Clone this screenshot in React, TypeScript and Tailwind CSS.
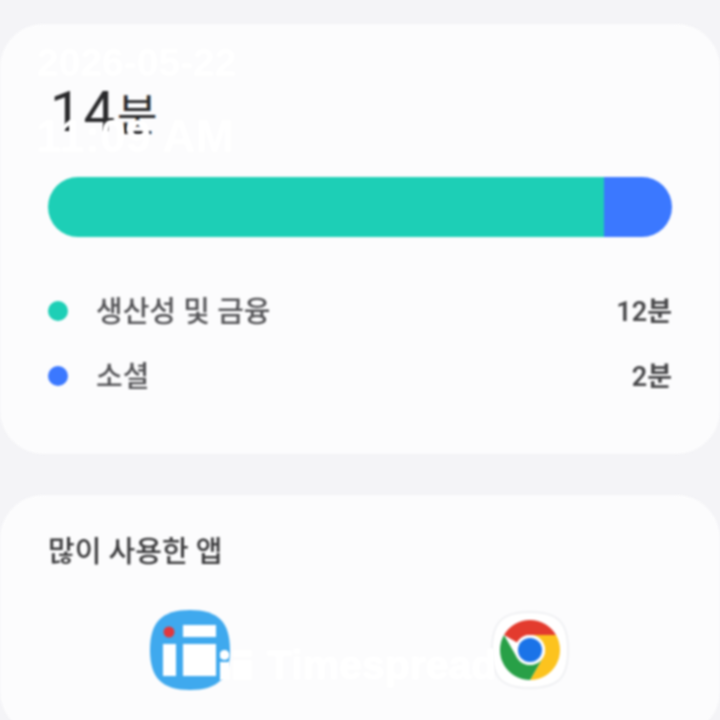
const korean = "font-['Roboto','Noto_Sans_CJK_KR',sans-serif]";

function LegendRow({ color, label, value }: { color: string; label: string; value: string }) {
  return (
    <div className="flex h-[65px] items-center">
      <div className={`h-5 w-5 rounded-full ${color}`} />
      <span className="ml-7 pt-[3px] text-[29px] leading-none font-medium text-[#555558]">{label}</span>
      <span className="ml-auto pt-[3px] text-[27px] leading-none font-semibold text-[#48484a]">{value}</span>
    </div>
  );
}

function TimespreadIcon() {
  return (
    <svg width="80" height="80" viewBox="0 0 80 80">
      <path d="M40 0C68 0 80 12 80 40C80 68 68 80 40 80C12 80 0 68 0 40C0 12 12 0 40 0Z" fill="#3fa9ee" />
      <circle cx="19" cy="22" r="5.5" fill="#e0383e" />
      <rect x="33" y="15" width="33" height="12" fill="#fff" />
      <rect x="13" y="34" width="13" height="32" fill="#fff" />
      <rect x="33" y="34" width="33" height="32" fill="#fff" />
    </svg>
  );
}

function ChromeIcon() {
  return (
    <svg width="80" height="80" viewBox="0 0 80 80">
      <path d="M40 2C68 2 78 12 78 40C78 68 68 78 40 78C12 78 2 68 2 40C2 12 12 2 40 2Z" fill="#fff" stroke="#ecedf0" strokeWidth="1.5" />
      <path d="M40 10A30 30 0 0 1 66 25H40A15 15 0 0 0 27 32.5L14 25A30 30 0 0 1 40 10Z" fill="#e33b2e" />
      <path d="M66 25A30 30 0 0 1 40 70L53 47.5A15 15 0 0 0 53 32.5 15 15 0 0 0 40 25Z" fill="#fcc31e" />
      <path d="M14 25L27 47.5A15 15 0 0 0 53 47.5L40 70A30 30 0 0 1 14 25Z" fill="#28a047" />
      <circle cx="40" cy="40" r="15" fill="#fff" />
      <circle cx="40" cy="40" r="12" fill="#1a73e8" />
    </svg>
  );
}

export default function App() {
  return (
    <div className={`relative h-[720px] w-[720px] overflow-hidden bg-[#f4f4f7] pt-6 ${korean}`}>
      <div className="blur-[0.8px]">
        <section className="h-[430px] rounded-[44px] bg-[#fcfcfd] px-12 pt-[60px]">
          <div className="flex h-[60px] items-baseline text-[#2a2a2c]">
            <span className="pl-[2px] text-[56px] leading-none tracking-[2px]">14</span>
            <span className="text-[44px] leading-none">분</span>
          </div>
          <div className="mt-[33px] flex h-[60px] overflow-hidden rounded-full">
            <div className="w-[556px] bg-[#1dcfb6]" />
            <div className="flex-1 bg-[#3b78ff]" />
          </div>
          <div className="mt-[41px]">
            <LegendRow color="bg-[#1dcfb6]" label="생산성 및 금융" value="12분" />
            <LegendRow color="bg-[#3b78ff]" label="소셜" value="2분" />
          </div>
        </section>

        <section className="mt-[41px] h-[240px] rounded-[44px] bg-[#fcfcfd] px-12 pt-[38px]">
          <h2 className="text-[29px] leading-[38px] font-medium text-[#3c3c3e]">많이 사용한 앱</h2>
          <div className="mt-[39px] flex">
            <div className="ml-[102px]"><TimespreadIcon /></div>
            <div className="ml-[260px]"><ChromeIcon /></div>
          </div>
        </section>
      </div>

      {/* watermark on top of the page */}
      <div className="absolute top-[40px] left-[37px] font-['Liberation_Sans',sans-serif] text-[39px] leading-[45px] font-bold text-white blur-[0.8px]">
        2026-05-22
      </div>
      <div className="absolute top-[110px] left-[36px] font-['Liberation_Sans',sans-serif] text-[46px] leading-[52px] font-bold text-white blur-[0.8px]">
        11:09 AM
      </div>
      <div className="absolute top-[642px] left-[220px] flex w-[277px] items-center overflow-hidden font-['Liberation_Sans',sans-serif] text-[41px] leading-[46px] font-bold text-white blur-[0.8px] [-webkit-text-stroke:1px_white]">
        <svg className="shrink-0" width="32" height="30" viewBox="0 0 32 30" fill="#fff">
          <circle cx="4.5" cy="5" r="5" />
          <rect x="0" y="12" width="10" height="18" />
          <rect x="13" y="0" width="19" height="7" />
          <rect x="13" y="10" width="19" height="20" />
        </svg>
        <span className="ml-[15px]">Timespread</span>
      </div>
    </div>
  );
}
